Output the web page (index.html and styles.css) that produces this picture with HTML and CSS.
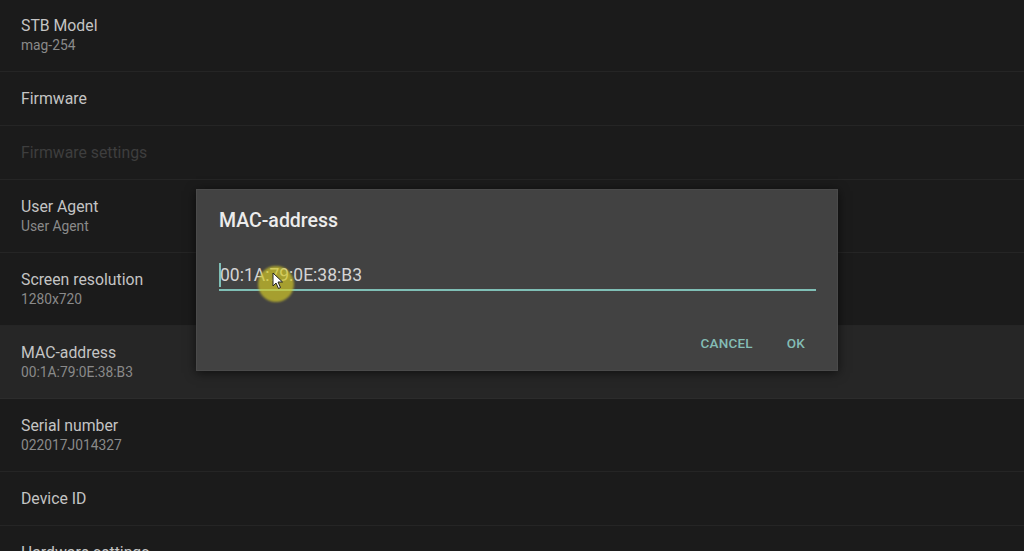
FILE: index.html
```html
<!DOCTYPE html>
<html>
<head>
<meta charset="utf-8">
<link rel="stylesheet" href="styles.css">
</head>
<body>
<div class="screen">
  <ul class="list">
    <li class="row two"><span class="title">STB Model</span><span class="sub">mag-254</span></li>
    <li class="row one"><span class="title">Firmware</span></li>
    <li class="row one disabled"><span class="title">Firmware settings</span></li>
    <li class="row two"><span class="title">User Agent</span><span class="sub">User Agent</span></li>
    <li class="row two"><span class="title">Screen resolution</span><span class="sub">1280x720</span></li>
    <li class="row two selected"><span class="title">MAC-address</span><span class="sub">00:1A:79:0E:38:B3</span></li>
    <li class="row two"><span class="title">Serial number</span><span class="sub">022017J014327</span></li>
    <li class="row one"><span class="title">Device ID</span></li>
    <li class="row one"><span class="title">Hardware settings</span></li>
  </ul>

  <div class="dialog">
    <div class="dialog-title">MAC-address</div>
    <div class="field">
      <span class="caret"></span><span class="value">00:1A:79:0E:38:B3</span>
    </div>
    <div class="actions">
      <span class="btn">CANCEL</span>
      <span class="btn">OK</span>
    </div>
  </div>

  <div class="touch"></div>
  <svg class="pointer" width="12" height="18" viewBox="0 0 12 18">
    <path d="M1 1 L1 14 L4 11 L6.5 16.5 L8.5 15.5 L6 10 L10.5 10 Z" fill="#ffffff" stroke="#222" stroke-width="1"/>
  </svg>
</div>
</body>
</html>
```

FILE: styles.css
```css
* { box-sizing: border-box; }
html, body {
  margin: 0;
  padding: 0;
  background: #1b1b1b;
  overflow: hidden;
}
.screen {
  position: relative;
  width: 1024px;
  height: 551px;
  overflow: hidden;
  font-family: Roboto, "Liberation Sans", sans-serif;
}
.list {
  list-style: none;
  margin: -1px 0 0 0;
  padding: 0;
}
.row {
  display: flex;
  flex-direction: column;
  justify-content: center;
  padding: 0 21px;
  border-bottom: 1px solid #252525;
}
.row.two { height: 73px; }
.row.one { height: 54px; }
.row.selected { background: #262626; border-bottom-color: #2c2c2c; }
.title {
  font-size: 15.8px;
  line-height: 20px;
  color: #c4c4c4;
}
.sub {
  font-size: 13.8px;
  line-height: 18px;
  color: #8a8a8a;
}
.disabled .title { color: #3e3e3e; }

.dialog {
  position: absolute;
  left: 196px;
  top: 189px;
  width: 642px;
  height: 182px;
  background: #424242;
  border: 1px solid #4a4a4a;
  box-shadow: 0 2px 10px rgba(0,0,0,0.6);
  padding: 19px 22px 0 22px;
  display: flex;
  flex-direction: column;
}
.dialog-title {
  font-size: 19.5px;
  font-weight: 500;
  line-height: 24px;
  color: #ececec;
}
.field {
  margin-top: 28px;
  width: 597px;
  height: 30px;
  border-bottom: 2px solid #7fbfb6;
  display: flex;
  align-items: center;
}
.caret {
  width: 2px;
  height: 24px;
  background: #7fbfb6;
  margin-right: -1px;
}
.value {
  font-size: 17.5px;
  color: #d4d4d4;
}
.actions {
  display: flex;
  justify-content: flex-end;
  gap: 34px;
  margin-top: 44px;
  padding-right: 10px;
}
.btn {
  font-size: 13.5px;
  font-weight: 500;
  color: #84bdb5;
  letter-spacing: 0.2px;
}
.touch {
  position: absolute;
  left: 258px;
  top: 266px;
  width: 36px;
  height: 36px;
  border-radius: 50%;
  background: rgba(210, 200, 40, 0.7);
  filter: blur(1px);
}
.pointer {
  position: absolute;
  left: 272px;
  top: 272px;
}
```
